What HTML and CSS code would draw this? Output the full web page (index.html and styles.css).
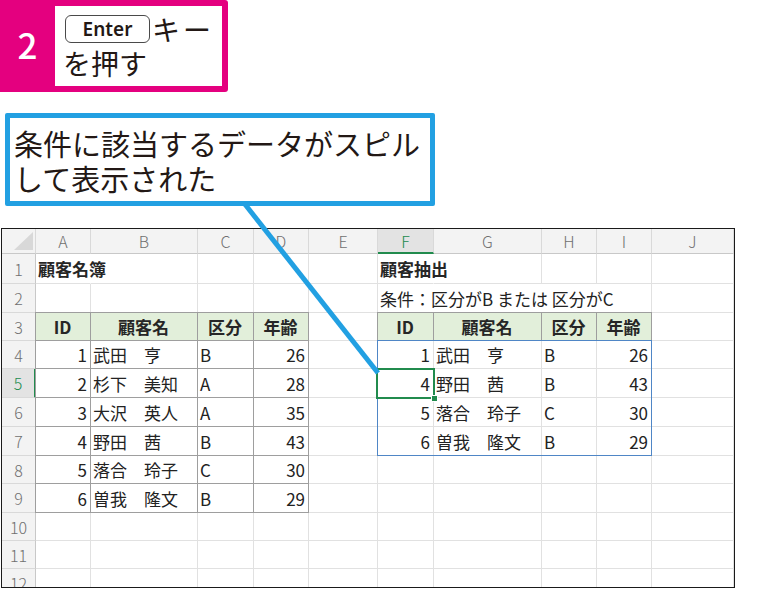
FILE: index.html
```html
<!DOCTYPE html>
<html lang="ja">
<head>
<meta charset="utf-8">
<title>顧客抽出</title>
<link rel="stylesheet" href="styles.css">
</head>
<body>
<div class="page">
  <div class="step">
    <div class="step-num">2</div>
    <div class="step-body">
      <div class="step-line"><span class="key">Enter</span><span class="kana">キー</span></div>
      <div class="step-line">を押す</div>
    </div>
  </div>

  <div class="callout">条件に該当するデータがスピル<br>して表示された</div>

  <div class="sheet">
    <!-- header row -->
    <div class="c h corner"><span class="tri"></span></div>
    <div class="c h">A</div>
    <div class="c h">B</div>
    <div class="c h">C</div>
    <div class="c h">D</div>
    <div class="c h">E</div>
    <div class="c h sel">F</div>
    <div class="c h">G</div>
    <div class="c h">H</div>
    <div class="c h">I</div>
    <div class="c h">J</div>

    <!-- row 1 -->
    <div class="c r">1</div>
    <div class="c b o">顧客名簿</div>
    <div class="c"></div>
    <div class="c"></div>
    <div class="c"></div>
    <div class="c"></div>
    <div class="c b o">顧客抽出</div>
    <div class="c"></div>
    <div class="c"></div>
    <div class="c"></div>
    <div class="c"></div>

    <!-- row 2 -->
    <div class="c r">2</div>
    <div class="c"></div>
    <div class="c"></div>
    <div class="c"></div>
    <div class="c"></div>
    <div class="c"></div>
    <div class="c o">条件：区分がB または 区分がC</div>
    <div class="c o"></div>
    <div class="c o"></div>
    <div class="c"></div>
    <div class="c"></div>

    <!-- row 3 -->
    <div class="c r">3</div>
    <div class="c t g m b etl">ID</div>
    <div class="c t g m b et">顧客名</div>
    <div class="c t g m b et">区分</div>
    <div class="c t g m b et">年齢</div>
    <div class="c"></div>
    <div class="c t g m b etl">ID</div>
    <div class="c t g m b et">顧客名</div>
    <div class="c t g m b et">区分</div>
    <div class="c t g m b et">年齢</div>
    <div class="c"></div>

    <!-- row 4 -->
    <div class="c r">4</div>
    <div class="c t n el">1</div>
    <div class="c t">武田　亨</div>
    <div class="c t">B</div>
    <div class="c t n">26</div>
    <div class="c"></div>
    <div class="c n">1</div>
    <div class="c">武田　亨</div>
    <div class="c">B</div>
    <div class="c n">26</div>
    <div class="c"></div>

    <!-- row 5 -->
    <div class="c r sel">5</div>
    <div class="c t n el">2</div>
    <div class="c t">杉下　美知</div>
    <div class="c t">A</div>
    <div class="c t n">28</div>
    <div class="c"></div>
    <div class="c n">4</div>
    <div class="c">野田　茜</div>
    <div class="c">B</div>
    <div class="c n">43</div>
    <div class="c"></div>

    <!-- row 6 -->
    <div class="c r">6</div>
    <div class="c t n el">3</div>
    <div class="c t">大沢　英人</div>
    <div class="c t">A</div>
    <div class="c t n">35</div>
    <div class="c"></div>
    <div class="c n">5</div>
    <div class="c">落合　玲子</div>
    <div class="c">C</div>
    <div class="c n">30</div>
    <div class="c"></div>

    <!-- row 7 -->
    <div class="c r">7</div>
    <div class="c t n el">4</div>
    <div class="c t">野田　茜</div>
    <div class="c t">B</div>
    <div class="c t n">43</div>
    <div class="c"></div>
    <div class="c n">6</div>
    <div class="c">曽我　隆文</div>
    <div class="c">B</div>
    <div class="c n">29</div>
    <div class="c"></div>

    <!-- row 8 -->
    <div class="c r">8</div>
    <div class="c t n el">5</div>
    <div class="c t">落合　玲子</div>
    <div class="c t">C</div>
    <div class="c t n">30</div>
    <div class="c"></div>
    <div class="c"></div>
    <div class="c"></div>
    <div class="c"></div>
    <div class="c"></div>
    <div class="c"></div>

    <!-- row 9 -->
    <div class="c r">9</div>
    <div class="c t n el">6</div>
    <div class="c t">曽我　隆文</div>
    <div class="c t">B</div>
    <div class="c t n">29</div>
    <div class="c"></div>
    <div class="c"></div>
    <div class="c"></div>
    <div class="c"></div>
    <div class="c"></div>
    <div class="c"></div>

    <!-- row 10 -->
    <div class="c r">10</div>
    <div class="c"></div><div class="c"></div><div class="c"></div><div class="c"></div><div class="c"></div>
    <div class="c"></div><div class="c"></div><div class="c"></div><div class="c"></div><div class="c"></div>

    <!-- row 11 -->
    <div class="c r">11</div>
    <div class="c"></div><div class="c"></div><div class="c"></div><div class="c"></div><div class="c"></div>
    <div class="c"></div><div class="c"></div><div class="c"></div><div class="c"></div><div class="c"></div>

    <!-- row 12 -->
    <div class="c r">12</div>
    <div class="c"></div><div class="c"></div><div class="c"></div><div class="c"></div><div class="c"></div>
    <div class="c"></div><div class="c"></div><div class="c"></div><div class="c"></div><div class="c"></div>

    <div class="spill"></div>
    <div class="cursor"><span class="handle"></span></div>
  </div>

  <svg class="pointer" width="783" height="589" viewBox="0 0 783 589">
    <line x1="244" y1="203" x2="378" y2="373" stroke="#22a0e2" stroke-width="5"/>
  </svg>
</div>
</body>
</html>
```

FILE: styles.css
```css
* { box-sizing: border-box; }
html, body { margin: 0; padding: 0; background: #fff; }
body {
  font-family: "Noto Sans CJK JP", "Noto Sans", sans-serif;
  color: #231815;
}
.page {
  position: relative;
  width: 783px;
  height: 589px;
  overflow: hidden;
}

/* step badge */
.step {
  display: flex;
  width: 228px;
  height: 92px;
  background: #e4007f;
  border-radius: 0 3px 3px 0;
}
.step-num {
  width: 55px;
  display: flex;
  align-items: center;
  justify-content: center;
  padding-bottom: 6px;
  color: #fff;
  font-size: 35px;
  font-weight: 500;
  line-height: 1;
}
.step-body {
  flex: 1;
  margin: 6px 6px 6px 0;
  background: #fff;
  padding: 6px 0 0 8px;
  font-size: 28px;
  line-height: 34px;
  color: #231815;
}
.step-line {
  display: flex;
  align-items: center;
  height: 34px;
}
.key {
  display: inline-flex;
  align-items: center;
  justify-content: center;
  width: 85px;
  height: 28px;
  margin-left: 2px;
  border: 1.5px solid #4a4a4a;
  border-radius: 6px;
  font-family: "Noto Sans", sans-serif;
  font-size: 19px;
  font-weight: 600;
  line-height: 1;
}
.kana {
  margin-left: 2px;
  letter-spacing: 3px;
}

/* callout */
.callout {
  margin: 21px 0 0 5px;
  width: 430px;
  height: 93px;
  border: 5px solid #22a0e2;
  border-radius: 2px;
  padding: 8px 0 0 4px;
  font-size: 29px;
  line-height: 35px;
  white-space: nowrap;
  color: #231815;
}

/* spreadsheet */
.sheet {
  position: relative;
  margin: 22px 0 0 1px;
  width: 734px;
  height: 360px;
  border: 1px solid #1a1a1a;
  overflow: hidden;
  display: grid;
  grid-template-columns: 34px 55px 107px 56px 55px 69px 56px 108px 55px 55px 82px;
  grid-template-rows: 25px 30px 29px 28px 28px 29px 29px 29px 28px 29px 28px 28px 28px;
  font-size: 17px;
  color: #222;
  background: #fff;
}
.c {
  display: flex;
  align-items: center;
  padding: 0 3px 0 2px;
  border-right: 1px solid #e1e1e1;
  border-bottom: 1px solid #e1e1e1;
  white-space: nowrap;
  min-width: 0;
}
.h {
  justify-content: center;
  background: #f3f3f3;
  border-right-color: #d9d9d9;
  border-bottom-color: #c8c8c8;
  color: #707070;
  font-size: 16px;
  font-weight: 300;
  padding: 0;
}
.r {
  justify-content: center;
  background: #f3f3f3;
  border-right-color: #c8c8c8;
  border-bottom-color: #d9d9d9;
  color: #707070;
  font-size: 16px;
  font-weight: 300;
  padding: 0;
}
.h.sel {
  background: #e3e3e3;
  border-bottom: 2px solid #218b4d;
  color: #218b4d;
}
.r.sel {
  background: #e3e3e3;
  border-right: 2px solid #218b4d;
  color: #218b4d;
}
.corner {
  justify-content: flex-end;
  align-items: flex-end;
  padding: 0 2px 3px 0;
}
.tri {
  width: 19px;
  height: 18px;
  background: #d8d8d8;
  clip-path: polygon(100% 0, 100% 100%, 0 100%);
}
.b { font-weight: 700; color: #262626; }
.n { justify-content: flex-end; }
.m { justify-content: center; }
.o { border-right-color: transparent; }
.t {
  border-right-color: #9e9e9e;
  border-bottom-color: #9e9e9e;
}
.g { background: #e2efda; }
.et { box-shadow: 0 -1px 0 #9e9e9e; }
.el { box-shadow: -1px 0 0 #9e9e9e; }
.etl { box-shadow: -1px 0 0 #9e9e9e, 0 -1px 0 #9e9e9e, -1px -1px 0 #9e9e9e; }

/* overlays on the grid */
.spill {
  position: absolute;
  grid-column: 7 / 11;
  grid-row: 5 / 9;
  top: -1px;
  left: -1px;
  right: 0;
  bottom: 0;
  border: 1px solid #4f86c6;
  pointer-events: none;
}
.cursor {
  position: absolute;
  grid-column: 7 / 8;
  grid-row: 6 / 7;
  top: -1px;
  left: -2px;
  right: -1px;
  bottom: -1px;
  border: 2px solid #218b4d;
  pointer-events: none;
}
.handle {
  position: absolute;
  right: -5px;
  bottom: -5px;
  width: 7px;
  height: 7px;
  background: #218b4d;
  border: 1px solid #fff;
}

.pointer {
  position: absolute;
  left: 0;
  top: 0;
  pointer-events: none;
}
```
